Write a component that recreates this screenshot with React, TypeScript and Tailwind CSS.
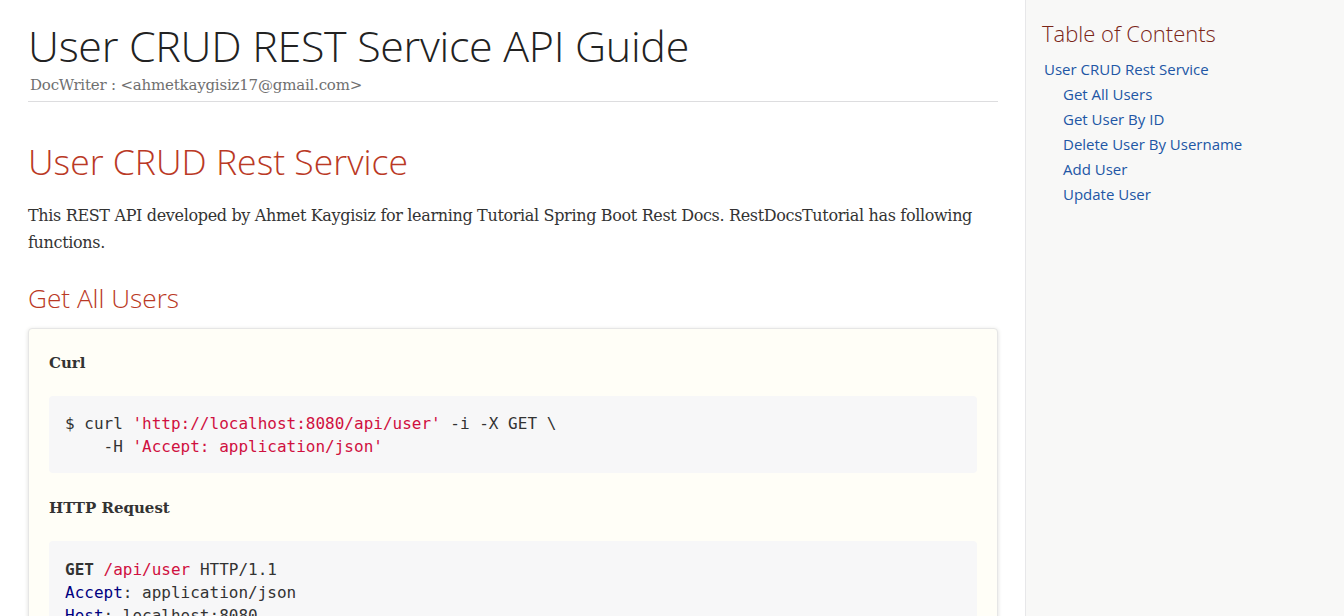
import React from "react";

const toc = [
  { label: "User CRUD Rest Service", level: 1 },
  { label: "Get All Users", level: 2 },
  { label: "Get User By ID", level: 2 },
  { label: "Delete User By Username", level: 2 },
  { label: "Add User", level: 2 },
  { label: "Update User", level: 2 },
];

const sans = "font-['Open_Sans',sans-serif]";
const serif = "font-['DejaVu_Serif',serif]";
const mono = "font-['DejaVu_Sans_Mono',monospace]";

export default function App() {
  return (
    <div className="flex h-[616px] w-[1344px] overflow-hidden bg-white text-[#262626]">
      {/* ── MAIN CONTENT ── */}
      <div className="flex-1 pl-[28px] pr-[27px]">
        {/* Header */}
        <div className="pt-[20px] border-b border-[#dddddf] pb-[3px]">
          <h1 className={`${sans} text-[43px] font-light leading-[52px] text-[#222] tracking-[-0.3px]`}>
            User CRUD REST Service API Guide
          </h1>
          <div className={`${serif} pl-[2px] text-[15px] leading-[26px] tracking-[-0.2px] text-[#6f6f6f]`}>
            DocWriter : &lt;ahmetkaygisiz17@gmail.com&gt;
          </div>
        </div>

        {/* Section */}
        <h2 className={`${sans} mt-[38px] text-[35.6px] font-light leading-[43px] text-[#ba3925]`}>
          User CRUD Rest Service
        </h2>
        <p className={`${serif} mt-[19px] text-[16px] leading-[27px] tracking-[-0.34px] text-[#333]`}>
          This REST API developed by Ahmet Kaygisiz for learning Tutorial Spring Boot Rest Docs. RestDocsTutorial has following
          functions.
        </p>

        <h3 className={`${sans} mt-[26px] text-[26.2px] font-light leading-[32px] text-[#ba3925]`}>
          Get All Users
        </h3>

        {/* Example block */}
        <div className="mt-[14px] rounded-[4px] border border-[#e6e6e6] bg-[#fffef7] px-[20px] pt-[21px] shadow-[0_1px_4px_#e0e0dc]">
          <p className={`${serif} text-[15px] font-bold leading-[27px] text-[#333]`}>Curl</p>
          <pre className={`${mono} mt-[19px] rounded-[4px] bg-[#f7f7f8] px-[16px] pt-[16px] pb-[15px] text-[16px] leading-[23px] text-[#333]`}>
            $ curl <span className="text-[#d01040]">'http://localhost:8080/api/user'</span> -i -X GET \{"\n"}
            {"    "}-H <span className="text-[#d01040]">'Accept: application/json'</span>
          </pre>

          <p className={`${serif} mt-[22px] text-[15px] font-bold leading-[27px] text-[#333]`}>HTTP Request</p>
          <pre className={`${mono} mt-[19px] rounded-[4px] bg-[#f7f7f8] px-[16px] pt-[17px] pb-[15px] text-[16px] leading-[23px] text-[#333]`}>
            <span className="font-bold">GET</span> <span className="text-[#d01040]">/api/user</span> HTTP/1.1{"\n"}
            <span className="text-[#000080]">Accept</span>: application/json{"\n"}
            <span className="text-[#000080]">Host</span>: localhost:8080
          </pre>
        </div>
      </div>

      {/* ── TABLE OF CONTENTS ── */}
      <aside className="w-[319px] shrink-0 border-l border-[#e7e7e9] bg-[#f8f8f7] pl-[16px] pt-[18px]">
        <div className={`${sans} text-[22px] font-light leading-[30px] text-[#7a2518]`}>Table of Contents</div>
        <ul className="mt-[9px]">
          {toc.map(item => (
            <li
              key={item.label}
              className={`${sans} text-[15px] leading-[25px] text-[#2156a5] ${item.level === 2 ? "pl-[21px]" : "pl-[2px]"}`}
            >
              {item.label}
            </li>
          ))}
        </ul>
      </aside>
    </div>
  );
}
